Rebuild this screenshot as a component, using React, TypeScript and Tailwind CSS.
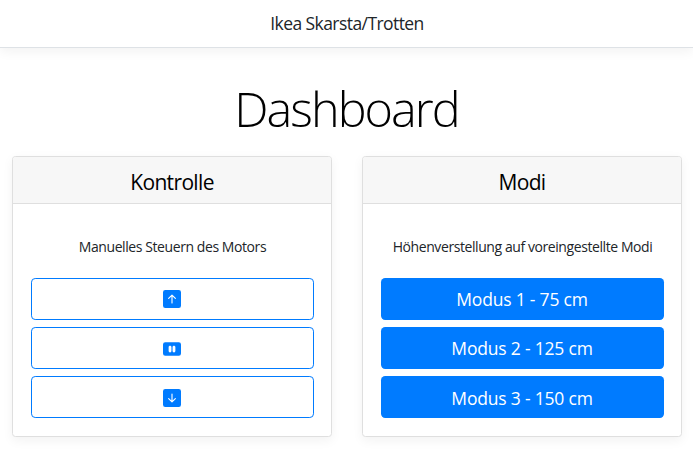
import type { ReactNode } from "react";
import { BsArrowDownSquareFill, BsArrowUpSquareFill, BsPauseBtnFill } from "react-icons/bs";

function Card({ title, text, children }: { title: string; text: ReactNode; children: ReactNode }) {
  return (
    <section className="h-[281px] w-80 rounded-[3.5px] border border-[#dfdfdf] bg-white shadow-[0_3.5px_10.5px_rgba(0,0,0,0.05)]">
      <header className="flex h-[47px] items-center justify-center rounded-t-[2.5px] border-b border-[#dfdfdf] bg-[#f7f7f7] pt-[5px]">
        <h4 className="text-[21px] leading-[25px] tracking-[-0.65px] text-black"><span>{title}</span></h4>
      </header>
      <div className="flex flex-col pr-[17px] pl-[18px] pt-[32px]">
        <p className="mb-[21px] h-[21px] whitespace-nowrap text-[14px] leading-[21px] tracking-[-0.42px]"><span>{text}</span></p>
        <div className="flex flex-col gap-[7px]">{children}</div>
      </div>
    </section>
  );
}

const controls = [
  { label: "Hoch", Icon: BsArrowUpSquareFill },
  { label: "Pause", Icon: BsPauseBtnFill },
  { label: "Runter", Icon: BsArrowDownSquareFill },
];

const modes = ["Modus 1 - 75 cm", "Modus 2 - 125 cm", "Modus 3 - 150 cm"];

export default function App() {
  return (
    <div className="h-[473px] w-[693px] overflow-hidden bg-white text-center font-['Open_Sans','Noto_Sans',sans-serif] text-[#212529]">
      <nav className="flex h-12 items-center justify-center border-b border-[#dee2e6] bg-white pl-px shadow-[0_3.5px_10.5px_rgba(0,0,0,0.05)]">
        <h5 className="text-[17.5px] leading-[21px] tracking-[-0.57px] text-[#212529]"><span>Ikea Skarsta/Trotten</span></h5>
      </nav>
      <h1 className="pt-[31px] text-[48.5px] leading-[59px] font-light tracking-[-1.95px] text-black"><span>Dashboard</span></h1>
      <main className="mt-[18px] flex gap-[30px] pl-3">
        <Card title="Kontrolle" text="Manuelles Steuern des Motors">
          {controls.map(({ label, Icon }) => (
            <button key={label} aria-label={label} className="flex h-[42px] items-center justify-center rounded-[4.2px] border border-[#007bff] pt-0.5 pr-px text-[#007bff] first:pt-0">
              <Icon className="size-[18px]" />
            </button>
          ))}
        </Card>
        <Card title="Modi" text="Höhenverstellung auf voreingestellte Modi">
          {modes.map((mode) => (
            <button key={mode} className="flex h-[42px] items-center justify-center rounded-[4.2px] bg-[#007bff] pr-px text-[17.5px] leading-[26px] tracking-[-0.2px] text-white last:pt-0.5">
              <span>{mode}</span>
            </button>
          ))}
        </Card>
      </main>
    </div>
  );
}
